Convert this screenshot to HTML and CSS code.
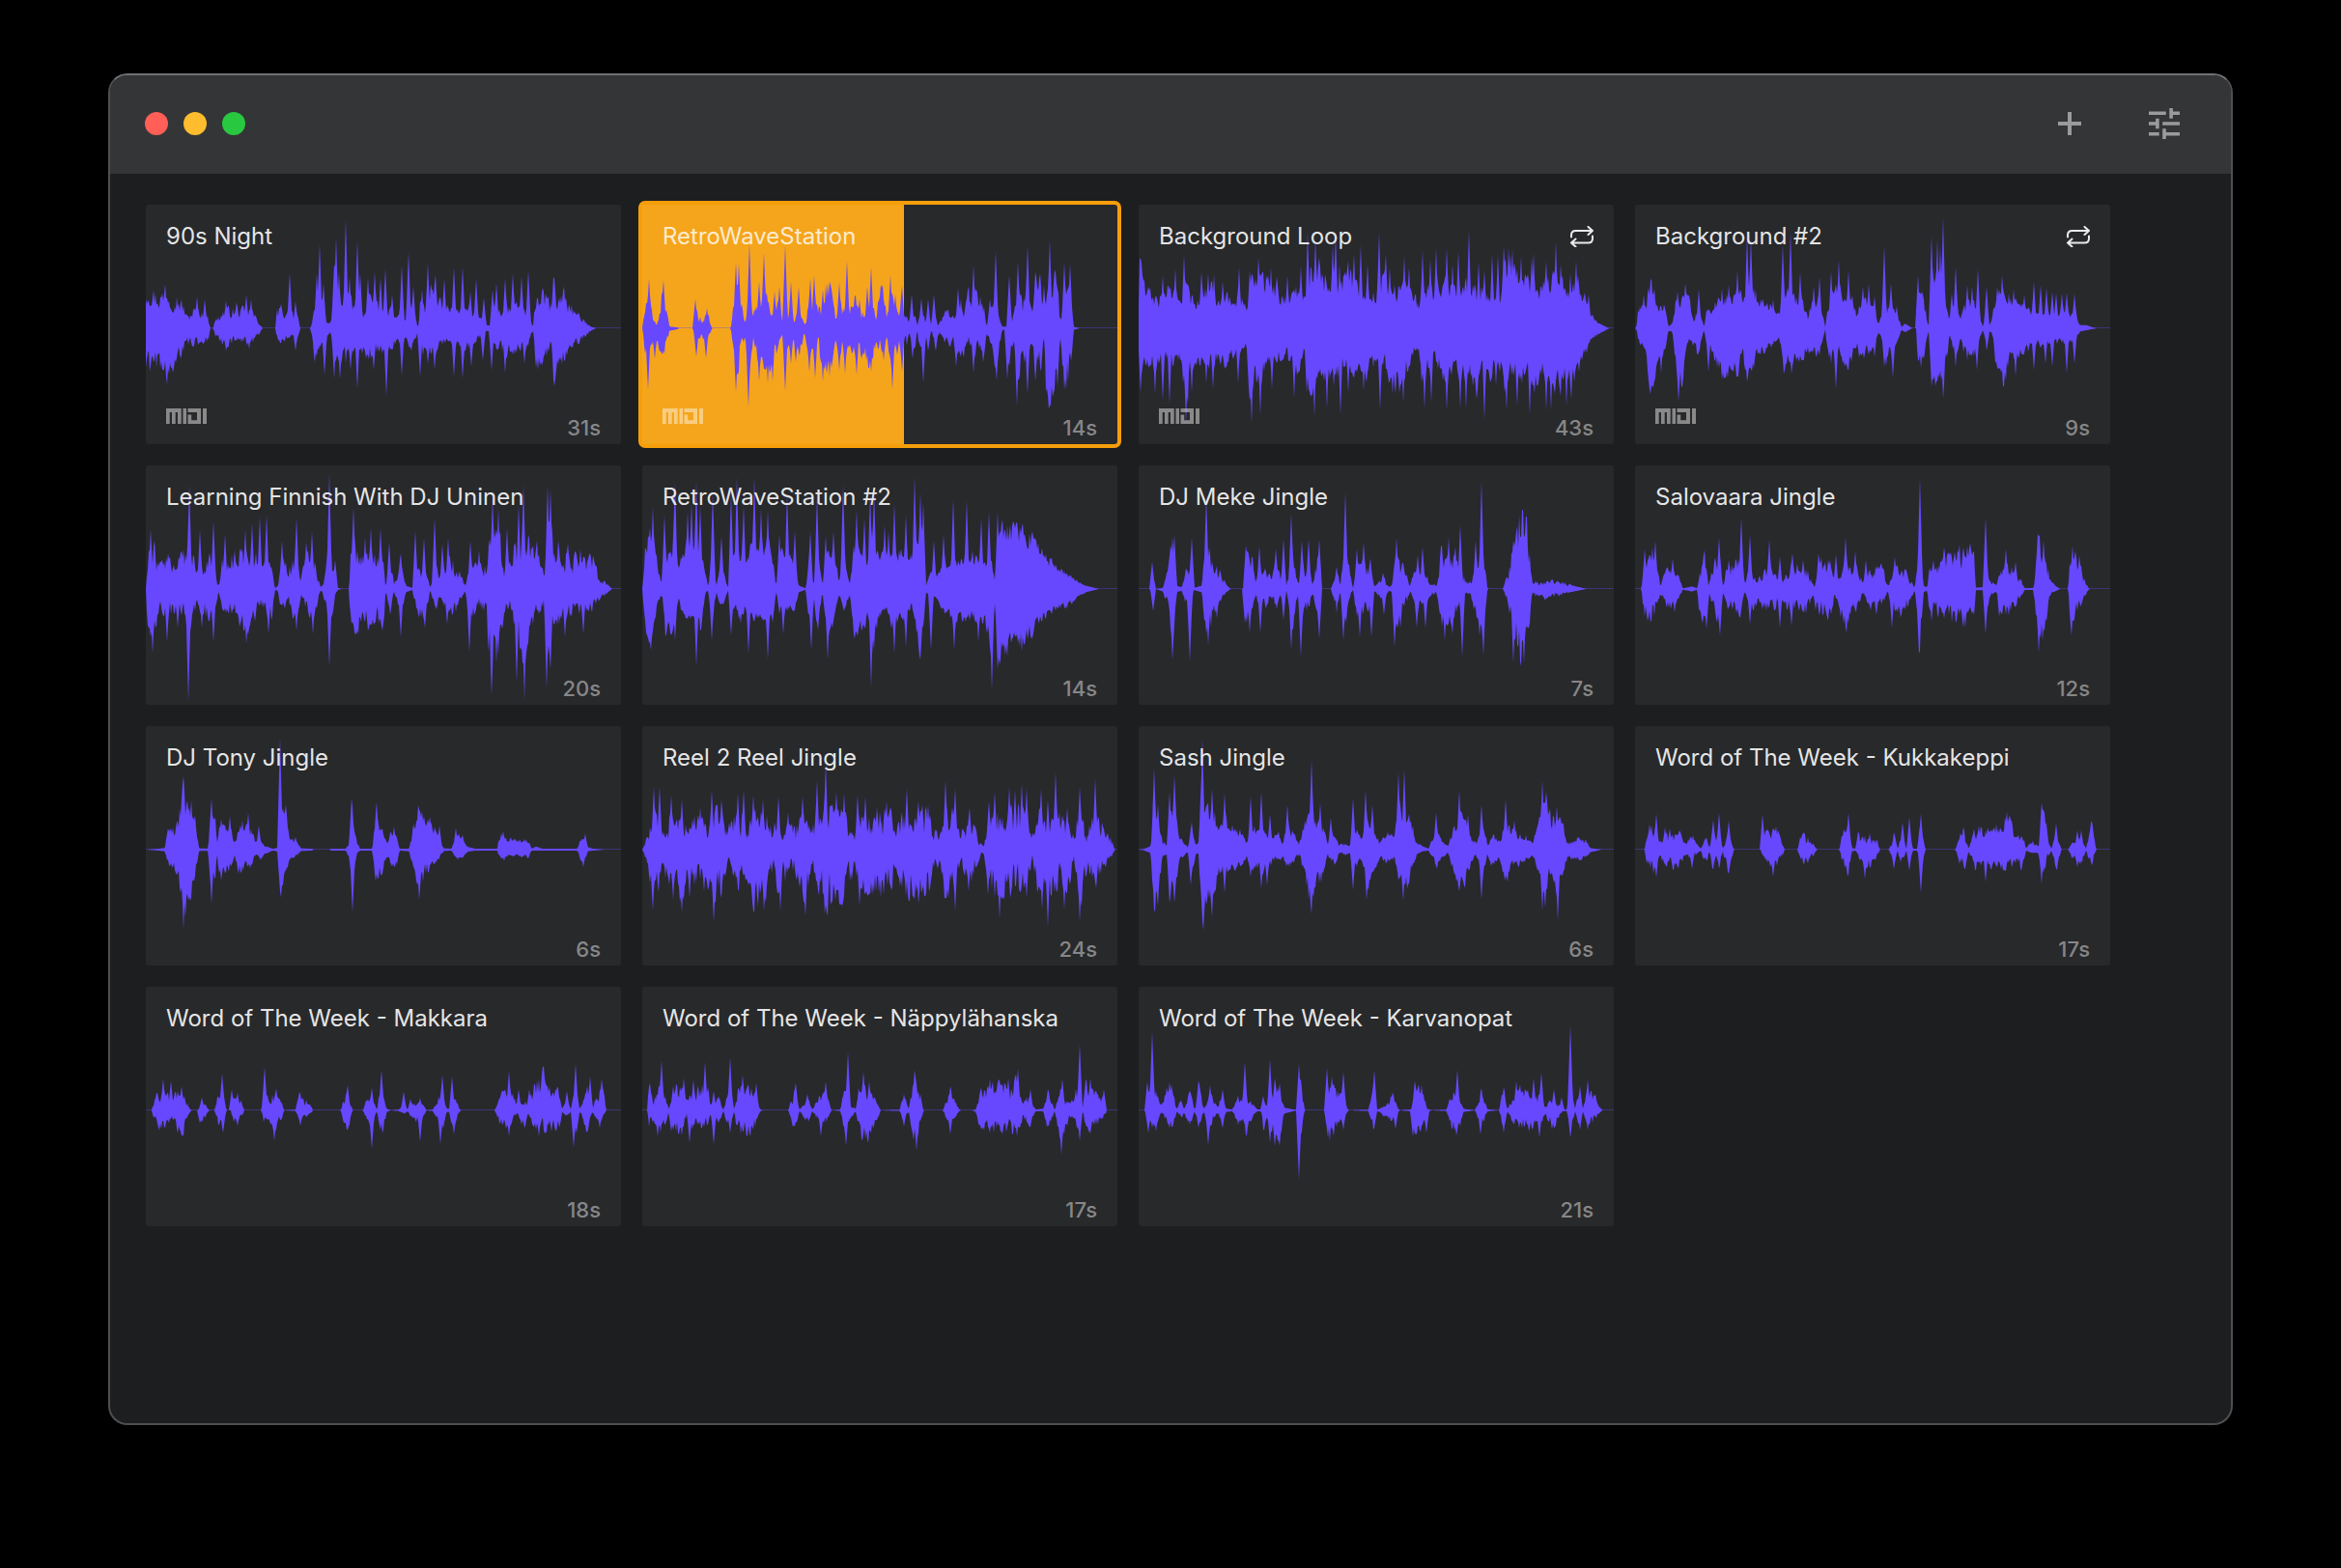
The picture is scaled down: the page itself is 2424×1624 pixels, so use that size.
FILE: index.html
```html
<!DOCTYPE html>
<html lang="en">
<head>
<meta charset="utf-8">
<title>Jingle Board</title>
<meta name="viewport" content="width=device-width, initial-scale=1">
<link rel="stylesheet" href="styles.css">
</head>
<body>
<svg class="sprite" aria-hidden="true">
  <symbol id="midi" viewBox="0 0 42 16">
    <path d="M0 0H15.7V16H12V4H9.7V16H6V4H3.7V16H0ZM17.5 0H21V16H17.5ZM22.5 0H36V16H22.5V6.5H26.2V12.3H32V4H22.5ZM38 0H42V16H38Z"/>
  </symbol>
  <symbol id="repeat" viewBox="0 0 24 22">
    <path d="M1 11.5V9.5Q1 5 5.5 5H23M18.5 1L23 5L18.5 9M23 10.5V13Q23 17.500 18.500 17.500H1M5.500 13.500L1 17.500L5.500 21.500"/>
  </symbol>
</svg>
<div class="window">
  <header class="titlebar">
    <div class="lights">
      <button class="light light-close" aria-label="Close"></button>
      <button class="light light-minimize" aria-label="Minimize"></button>
      <button class="light light-zoom" aria-label="Zoom"></button>
    </div>
    <div class="tools">
      <button class="tool" aria-label="Add clip"><svg class="icon-plus" viewBox="0 0 24 24"><path d="M10 0h4v10h10v4H14v10h-4V14H0v-4h10z"/></svg></button>
      <button class="tool" aria-label="Settings"><svg class="icon-tune" viewBox="3 3 18 18"><path d="M3 17v2h6v-2H3zM3 5v2h10V5H3zm10 16v-2h8v-2h-8v-2h-2v6h2zM7 9v2H3v2h4v2h2V9H7zm14 4v-2H11v2h10zm-6-4h2V7h4V5h-4V3h-2v6z"/></svg></button>
    </div>
  </header>
  <main class="board">
    <button class="clip"><svg class="wave" data-clip="night"></svg><span class="title">90s Night</span><svg class="midi"><use href="#midi"/></svg><span class="time">31s</span></button>
    <button class="clip playing"><span class="progress" style="width:55%"></span><svg class="wave" data-clip="retro"></svg><span class="title">RetroWaveStation</span><svg class="midi"><use href="#midi"/></svg><span class="time">14s</span></button>
    <button class="clip"><svg class="wave" data-clip="loop"></svg><span class="title">Background Loop</span><svg class="repeat"><use href="#repeat"/></svg><svg class="midi"><use href="#midi"/></svg><span class="time">43s</span></button>
    <button class="clip"><svg class="wave" data-clip="background2"></svg><span class="title">Background #2</span><svg class="repeat"><use href="#repeat"/></svg><svg class="midi"><use href="#midi"/></svg><span class="time">9s</span></button>
    <button class="clip"><svg class="wave" data-clip="finnish"></svg><span class="title">Learning Finnish With DJ Uninen</span><span class="time">20s</span></button>
    <button class="clip"><svg class="wave" data-clip="retro2"></svg><span class="title">RetroWaveStation #2</span><span class="time">14s</span></button>
    <button class="clip"><svg class="wave" data-clip="meke"></svg><span class="title">DJ Meke Jingle</span><span class="time">7s</span></button>
    <button class="clip"><svg class="wave" data-clip="salovaara"></svg><span class="title">Salovaara Jingle</span><span class="time">12s</span></button>
    <button class="clip"><svg class="wave" data-clip="tony"></svg><span class="title">DJ Tony Jingle</span><span class="time">6s</span></button>
    <button class="clip"><svg class="wave" data-clip="reel"></svg><span class="title">Reel 2 Reel Jingle</span><span class="time">24s</span></button>
    <button class="clip"><svg class="wave" data-clip="sash"></svg><span class="title">Sash Jingle</span><span class="time">6s</span></button>
    <button class="clip"><svg class="wave" data-clip="kukkakeppi"></svg><span class="title">Word of The Week - Kukkakeppi</span><span class="time">17s</span></button>
    <button class="clip"><svg class="wave" data-clip="makkara"></svg><span class="title">Word of The Week - Makkara</span><span class="time">18s</span></button>
    <button class="clip"><svg class="wave" data-clip="nappylahanska"></svg><span class="title">Word of The Week - Näppylähanska</span><span class="time">17s</span></button>
    <button class="clip"><svg class="wave" data-clip="karvanopat"></svg><span class="title">Word of The Week - Karvanopat</span><span class="time">21s</span></button>
  </main>
</div>
<script src="waves.js"></script>
</body>
</html>
```
FILE: styles.css
```css
:root {
  --accent: #6748ff;
  --playing: #f5a51b;
  --text: rgba(255, 255, 255, 0.9);
  --text-playing: rgba(255, 255, 255, 0.8);
  --muted: rgba(255, 255, 255, 0.45);
}

* {
  box-sizing: border-box;
}

body {
  margin: 0;
  background: #000;
  color: var(--text);
  font-family: Inter, "Liberation Sans", sans-serif;
}

button {
  margin: 0;
  padding: 0;
  border: 0;
  background: none;
  color: inherit;
  font: inherit;
}

.sprite {
  position: absolute;
  width: 0;
  height: 0;
}

.window {
  display: flex;
  flex-direction: column;
  min-height: calc(100vh - 224px);
  margin: 76px 112px 148px;
  border: 2px solid #4e4f51;
  border-top-color: #707172;
  border-radius: 20px;
  background: #1d1e20;
  overflow: hidden;
}

.titlebar {
  display: flex;
  align-items: center;
  justify-content: space-between;
  height: 102px;
  padding: 0 45px 2px 36px;
  background: #343537;
}

.lights {
  display: flex;
  gap: 16px;
}

.light {
  width: 24px;
  height: 24px;
  border-radius: 50%;
}

.light-close { background: #ff5f57; }
.light-minimize { background: #febc2e; }
.light-zoom { background: #28c840; }

.tools {
  display: flex;
  gap: 50px;
}

.tool {
  display: grid;
  place-items: center;
  width: 48px;
  height: 48px;
  fill: #9a9b9c;
}

.icon-plus {
  width: 24px;
  height: 24px;
}

.icon-tune {
  width: 32px;
  height: 32px;
}

.board {
  display: grid;
  grid-template-columns: repeat(auto-fill, 492px);
  gap: 22px;
  padding: 32px 37px;
}

.clip {
  position: relative;
  display: grid;
  grid-template-columns: 1fr auto;
  grid-template-rows: auto 1fr;
  height: 248px;
  padding: 18px 21px 0;
  border-radius: 3px;
  background: #28292b;
  text-align: left;
}

.clip.playing {
  box-shadow: 0 0 0 4px #f59e0b;
}

.clip.playing .title {
  color: var(--text-playing);
}

.progress {
  position: absolute;
  inset: 0 auto 0 0;
  background: var(--playing);
}

.wave {
  position: absolute;
  inset: 0;
  width: 100%;
  height: 100%;
  fill: var(--accent);
}

.title {
  position: relative;
  font-size: 24px;
  line-height: 30px;
  font-weight: 400;
  white-space: nowrap;
}

.repeat {
  position: relative;
  align-self: center;
  justify-self: end;
  width: 24px;
  height: 22px;
  fill: none;
  stroke: var(--text);
  stroke-width: 2;
  stroke-linecap: round;
  stroke-linejoin: round;
}

.midi {
  position: relative;
  grid-row: 2;
  grid-column: 1;
  align-self: end;
  width: 42px;
  height: 16px;
  margin-bottom: 21px;
  fill: var(--muted);
}

.time {
  position: relative;
  grid-row: 2;
  grid-column: 2;
  align-self: end;
  margin-bottom: 3px;
  color: var(--muted);
  font-size: 22px;
  line-height: 28px;
  font-weight: 500;
}
```
FILE: waves.js
```js
// Amplitude data per clip. body: "x up down" along the clip, joined linearly.
// up / down: "x,height" transients. span: length of the clip in x units.
// rough: how far single samples fall below and above the body.
const clips = {
  night: { span: 1377, rough: 0.7,
    body: "0 110 110;5 115 115;30 90 95;50 90 110;60 110 150;70 90 110;90 85 90;110 60 60;120 30 40;140 50 45;165 45 35;180 30 40;187 0 0;195 0 0;200 20 20;230 50 50;260 50 30;300 50 40;320 30 30;338 0 0;375 0 0;380 45 30;395 60 45;405 35 30;420 50 20;440 30 40;448 0 0;477 0 0;490 50 90;505 90 80;515 20 20;535 15 15;545 60 70;560 60 90;580 100 90;600 60 60;620 60 80;630 25 60;650 90 80;665 70 60;690 40 60;720 50 50;745 25 20;770 50 50;790 5 10;795 70 60;810 60 70;830 120 60;860 60 40;890 50 60;920 60 60;950 40 40;985 10 8;1000 8 10;1010 60 50;1030 50 60;1060 60 70;1090 60 60;1110 30 40;1122 5 5;1130 90 100;1160 90 70;1175 60 50;1182 130 160;1190 80 90;1210 95 80;1240 50 50;1270 20 25;1290 5 8;1305 0 0",
    up: "57,138;148,98;172,90;232,85;262,80;290,105;305,90;418,172;435,85;495,170;505,262;515,140;545,200;552,282;560,175;578,342;590,160;614,272;620,170;645,158;662,175;681,155;695,185;715,105;743,195;760,237;775,130;800,120;818,203;840,165;866,155;894,190;919,190;940,115;957,155;980,95;1005,120;1017,140;1040,155;1063,170;1090,160;1107,180;1182,158;1213,130",
    down: "62,175;232,70;300,65;435,70;517,145;545,155;562,158;593,130;614,188;661,130;698,210;743,145;796,150;818,110;838,130;894,150;917,155;943,120;978,100;1002,130;1040,140;1097,110;1135,130;1184,180" },
  retro: { span: 1476, rough: 0.8,
    body: "0 0 0;10 60 70;18 100 120;25 60 60;35 20 40;45 15 30;55 50 60;65 110 70;75 50 60;85 5 8;110 3 3;113 0 0;158 0 0;165 50 50;185 20 15;200 55 60;215 3 3;218 0 0;275 0 0;283 60 60;292 110 150;305 70 60;320 20 20;332 80 130;345 40 20;355 50 60;365 80 100;380 120 90;395 50 120;405 30 60;425 70 60;435 20 20;445 70 60;460 30 30;475 25 40;487 60 70;505 10 10;515 50 90;530 50 60;545 60 40;560 70 110;575 120 110;590 110 90;600 40 40;615 70 60;635 40 50;660 80 60;675 50 50;690 50 90;710 90 100;725 40 40;745 110 60;760 30 30;775 90 90;790 40 60;805 90 60;812 30 10;822 30 40;835 5 8;845 40 60;855 10 10;868 60 90;880 15 20;890 30 40;900 4 8;907 50 50;920 10 15;935 30 30;950 50 50;965 30 40;985 60 60;1000 60 70;1015 90 40;1030 80 80;1045 90 60;1060 60 70;1070 10 20;1080 60 50;1090 50 60;1100 100 130;1110 30 60;1118 5 5;1132 5 5;1140 110 110;1150 30 40;1160 60 80;1168 130 180;1180 70 50;1195 110 130;1205 60 50;1215 60 50;1225 140 100;1240 140 120;1247 20 20;1255 80 200;1270 130 210;1285 140 100;1292 100 130;1300 20 20;1310 100 150;1325 100 140;1337 40 40;1340 5 5;1359 0 0",
    up: "22,155;67,150;166,90;202,62;292,205;300,200;333,262;362,145;379,235;410,115;427,130;445,258;462,145;486,128;521,155;535,165;562,120;575,140;583,145;613,142;635,210;660,100;675,90;698,130;710,190;742,135;748,135;772,165;785,105;808,132;838,105;868,92;888,90;905,105;980,125;990,90;1028,195;1050,100;1080,90;1099,240;1140,165;1168,205;1198,258;1222,175;1235,170;1248,135;1265,275;1283,165;1312,205;1328,200",
    down: "17,190;38,95;168,88;199,92;291,198;331,245;363,165;390,170;405,165;445,195;462,110;478,105;520,135;537,155;560,165;583,150;612,130;630,140;665,145;710,135;750,100;777,190;806,135;840,95;872,170;888,70;912,70;975,120;1028,138;1060,105;1100,162;1135,160;1165,240;1196,205;1220,165;1240,135;1262,225;1270,240;1290,180;1315,155" },
  loop: { span: 1476, rough: 0.5,
    body: "0 0 0;3 200 180;10 190 150;20 110 100;40 100 95;60 80 100;75 95 100;90 120 80;110 100 100;125 80 80;140 120 150;150 120 220;160 90 120;175 75 100;200 110 90;225 120 110;245 90 80;265 100 110;285 80 90;300 90 70;320 80 60;335 60 60;345 120 200;360 150 140;380 140 150;400 130 100;420 120 90;445 90 80;460 80 75;480 110 120;500 120 130;515 100 60;525 160 170;545 170 190;570 160 150;590 130 130;610 160 160;630 130 110;650 150 120;670 160 120;690 80 160;710 120 140;725 90 110;745 120 100;765 160 100;780 120 150;800 110 170;820 110 160;840 130 100;860 90 60;870 60 60;880 110 200;895 120 130;915 110 60;935 120 120;960 140 170;985 100 100;1005 130 130;1030 120 130;1050 110 170;1070 110 120;1090 110 150;1110 100 100;1125 80 130;1140 200 170;1160 190 130;1180 150 160;1200 150 130;1220 140 170;1240 110 150;1260 150 130;1275 130 130;1295 170 190;1310 150 170;1330 110 140;1345 110 150;1365 140 150;1375 90 90;1390 80 80;1400 50 40;1415 25 25;1440 10 12;1462 0 0",
    up: "5,215;75,165;114,185;142,228;195,175;215,170;235,168;260,145;313,190;345,180;371,220;395,165;410,190;430,160;462,165;503,195;524,300;550,280;560,220;602,260;613,300;625,200;650,210;668,230;689,260;710,200;748,300;768,230;780,190;824,225;840,190;882,240;907,215;925,250;957,250;975,200;993,240;1027,305;1055,205;1075,180;1098,230;1115,230;1133,255;1150,250;1160,245;1187,225;1220,220;1228,235;1265,210;1297,270;1310,200;1342,170;1360,210;1385,110;1398,105",
    down: "6,200;50,205;75,225;95,235;147,300;165,200;210,170;230,190;310,170;350,295;378,270;413,190;482,215;523,200;545,275;586,250;627,270;652,200;700,195;749,255;790,205;823,230;888,250;910,230;958,255;998,250;1018,250;1050,220;1075,285;1110,180;1142,255;1175,240;1215,270;1267,255;1280,255;1310,210;1328,240;1345,220" },
  background2: { span: 1169, rough: 0.5,
    body: "0 0 0;4 5 5;8 60 30;20 70 60;28 60 80;33 130 150;45 140 150;52 60 120;60 60 90;75 60 60;82 5 8;92 15 10;100 80 100;110 60 190;118 90 130;125 90 60;132 90 40;145 30 50;155 50 80;163 30 30;170 3 3;176 50 60;190 50 60;205 90 120;215 80 140;235 100 130;250 110 130;265 100 80;275 130 140;285 120 130;300 90 80;315 80 65;335 70 50;355 50 30;365 120 120;380 100 100;395 90 90;410 90 90;425 30 60;435 80 80;455 70 70;468 3 3;475 60 80;485 100 90;500 120 60;515 110 110;530 100 100;545 40 50;555 80 90;570 80 70;585 70 80;598 10 12;605 40 30;618 50 100;625 60 60;640 50 60;652 20 20;655 3 5;665 15 12;682 0 0;692 0 0;696 120 110;705 100 110;715 50 50;722 3 5;730 150 150;745 120 130;760 100 150;768 60 70;775 15 15;785 60 70;792 80 70;800 30 40;815 70 80;828 80 70;840 60 70;850 30 30;856 3 5;865 60 60;872 10 10;880 40 20;886 90 90;900 100 120;910 100 160;920 90 80;940 80 90;960 70 70;975 50 50;990 40 50;1010 45 45;1030 50 45;1060 45 40;1085 40 30;1095 10 10;1110 10 6;1128 2 2;1135 0 0",
    up: "40,155;22,105;65,70;104,115;123,140;158,120;180,60;213,125;230,135;252,180;275,290;285,285;297,120;340,90;363,260;382,300;407,175;440,130;453,160;483,178;502,212;526,180;561,130;575,140;590,100;614,255;630,140;645,70;697,165;730,288;744,275;752,255;759,345;780,110;790,190;818,135;830,130;844,185;864,130;890,130;904,165;920,110;932,120;958,105;981,145;998,135;1012,125;1026,115;1036,110;1050,110;1063,112;1080,108",
    down: "38,205;48,160;65,140;108,228;117,180;180,135;213,160;255,150;275,165;365,140;384,140;405,105;447,90;482,110;495,190;523,120;590,90;614,120;634,155;730,180;738,180;759,218;790,120;818,100;842,130;905,180;935,150;982,130;1010,110;1027,120;1063,140;1080,110" },
  finnish: { span: 749, rough: 0.8,
    body: "0 0 0;3 90 100;8 110 120;15 100 100;25 80 60;40 70 60;60 90 60;68 120 120;75 90 50;90 70 60;105 90 90;115 5 10;120 70 50;135 80 60;155 110 110;170 100 80;180 50 40;190 80 60;197 90 90;204 2 3;208 10 5;215 70 70;225 50 40;235 90 80;245 30 20;250 60 40;258 100 80;268 60 60;276 2 2;282 40 30;290 110 120;297 50 40;302 3 3;310 0 0;320 0 0;323 90 90;328 120 120;335 120 100;345 80 90;360 80 100;375 60 90;378 3 3;385 70 60;392 10 10;400 90 80;410 10 10;420 3 3;425 50 50;440 70 90;448 3 3;458 60 50;465 20 20;475 80 60;490 60 60;503 10 10;512 70 90;525 60 50;535 60 60;543 120 190;557 200 180;565 30 50;575 90 60;587 130 130;597 180 200;605 110 90;620 100 80;628 40 50;635 200 200;645 100 90;660 90 80;675 90 70;690 80 60;705 80 60;715 30 30;725 20 15;735 0 0",
    up: "8,185;13,150;35,110;69,325;85,185;106,210;125,170;140,120;157,185;168,205;180,225;191,232;215,150;238,222;252,145;262,180;290,360;299,90;328,255;345,160;355,190;370,190;384,145;402,110;424,180;439,158;455,220;468,140;477,158;512,150;525,120;547,290;556,250;570,190;587,260;596,325;616,150;634,320;638,310;650,150;665,140;685,125;700,110",
    down: "10,200;33,165;50,120;67,350;88,120;107,165;158,170;193,140;237,130;263,140;290,240;330,140;350,130;385,80;402,150;440,120;475,110;510,195;545,330;552,230;585,290;597,345;632,310;638,250;660,150;690,140" },
  retro2: { span: 749, rough: 0.4,
    body: "0 0 0;5 120 120;15 180 180;25 60 30;32 10 20;36 90 130;50 120 110;58 70 30;66 120 100;80 120 80;92 130 120;100 50 10;104 5 5;110 110 90;117 10 10;125 80 60;132 20 20;136 3 3;140 130 90;148 80 50;155 110 100;162 70 60;170 120 90;180 140 80;190 110 100;200 120 110;206 90 90;211 3 3;216 110 70;225 110 60;232 100 60;240 60 60;247 10 10;258 2 2;262 80 100;270 10 10;276 120 130;284 10 10;292 100 120;303 120 100;310 20 20;318 100 60;327 10 20;333 110 130;350 110 110;358 80 70;362 150 200;372 100 90;385 90 60;395 90 120;405 110 80;415 120 90;425 90 50;437 160 170;444 120 100;447 10 10;455 50 30;460 20 20;470 60 50;485 80 80;500 80 90;510 100 90;520 90 80;530 90 100;540 80 90;550 90 170;557 10 10;559 180 220;570 180 180;585 180 170;600 180 160;615 150 130;625 120 100;640 90 70;655 60 55;670 45 50;685 25 25;700 10 10;720 0 0",
    up: "12,190;17,255;35,230;50,250;52,330;72,240;77,270;85,335;92,260;111,300;125,165;140,300;149,350;160,260;177,350;188,250;198,245;216,170;228,300;240,180;265,180;276,290;290,165;302,180;316,325;338,245;350,220;360,300;366,310;382,200;388,180;398,265;415,230;430,350;438,300;443,270;460,150;475,170;490,280;511,275;520,120;535,220;546,240;560,240;600,205;618,155",
    down: "14,190;52,160;86,240;110,160;140,145;167,200;198,220;222,140;267,190;292,220;335,150;361,305;398,200;415,180;439,220;455,190;492,190;530,165;551,315;560,250;575,210;598,195" },
  meke: { span: 749, rough: 0.8,
    body: "0 0 0;18 0 0;20 30 30;25 30 20;27 0 0;38 3 8;48 60 50;54 140 160;60 10 10;68 5 5;75 50 40;82 60 120;86 3 3;100 10 10;107 180 150;114 90 90;125 50 50;135 20 15;145 0 0;165 0 0;169 90 90;178 90 60;185 15 10;190 60 60;200 50 50;208 30 20;218 80 50;226 15 10;233 10 5;243 100 110;248 50 40;253 20 20;257 50 70;265 60 60;275 20 10;282 80 90;289 0 0;303 0 0;312 50 60;318 20 10;326 120 100;333 50 20;338 3 3;345 60 90;355 60 60;365 70 60;372 8 5;380 20 25;386 30 30;395 5 5;400 15 10;406 100 100;420 40 50;428 10 8;435 50 40;450 50 50;460 20 15;470 8 12;478 110 90;490 80 100;505 80 60;515 20 10;522 20 20;530 40 60;543 100 120;550 0 0;574 0 0;582 40 30;592 150 120;603 200 200;614 150 130;620 20 15;640 18 28;655 22 22;675 15 12;706 0 0",
    up: "22,85;56,168;74,65;84,160;106,285;111,130;128,60;169,135;178,98;191,132;216,125;229,155;241,235;258,150;268,155;285,155;312,70;326,300;344,125;355,145;366,95;385,50;407,158;417,80;440,105;448,130;478,135;489,160;500,130;507,198;532,150;541,335;591,150;597,195;604,242;610,225;650,28",
    down: "23,68;53,222;81,225;109,175;124,90;168,105;175,135;192,135;228,95;241,188;256,210;284,155;322,160;349,150;367,150;386,80;403,180;412,120;438,120;452,120;482,160;495,140;510,210;538,145;543,205;590,230;603,240;608,230" },
  salovaara: { span: 749, rough: 0.8,
    body: "0 0 0;10 0 0;13 60 60;22 80 80;32 70 60;40 10 10;50 50 50;60 60 50;72 20 20;75 2 2;90 8 8;98 2 2;102 40 80;110 90 90;116 10 10;123 60 50;133 90 110;139 5 5;145 70 50;165 70 70;173 15 10;182 60 60;190 30 40;205 50 60;220 50 50;228 10 20;240 40 50;250 70 50;262 50 50;271 50 60;283 5 5;290 70 60;308 70 70;315 10 15;330 60 100;347 60 60;360 20 10;372 50 60;390 60 40;398 8 8;410 60 70;425 50 60;441 3 3;449 160 160;455 10 10;460 5 5;465 60 70;480 60 60;488 80 70;510 100 100;535 100 70;537 4 4;550 6 4;553 80 60;560 20 20;570 10 10;574 60 60;590 60 60;610 20 20;614 2 3;628 3 3;635 120 130;647 90 100;655 20 15;670 0 0;683 0 0;685 90 90;697 80 60;710 20 15;716 0 0",
    up: "15,125;27,130;32,150;60,95;108,105;133,160;148,90;168,222;181,168;212,152;228,100;248,110;265,90;289,110;317,108;332,162;347,118;364,90;388,80;410,100;449,345;471,90;487,130;508,120;520,100;532,105;552,222;585,125;600,85;635,170;644,150;690,135;700,105",
    down: "24,102;62,72;112,125;134,145;181,110;228,120;246,115;285,65;333,135;380,80;405,120;447,200;468,100;505,105;520,120;552,140;585,80;637,200;642,160;688,145" },
  tony: { span: 749, rough: 0.6,
    body: "0 0 0;15 2 2;30 5 5;34 50 45;45 60 50;52 90 80;58 160 160;65 130 110;70 100 130;78 90 60;84 4 4;98 4 4;103 110 110;110 80 100;112 5 5;116 80 70;125 60 60;133 60 50;140 25 20;145 60 70;155 70 50;165 60 50;172 30 20;180 30 25;190 10 12;200 3 3;207 5 5;212 150 120;217 100 90;222 90 60;228 30 20;237 25 18;245 4 4;263 3 3;264 0 0;290 0 0;292 3 3;315 3 3;320 20 20;326 120 130;333 20 10;338 3 3;357 3 3;362 100 80;372 60 60;380 15 20;388 55 40;396 30 40;400 3 3;415 3 5;425 90 80;432 100 100;442 90 60;455 70 40;465 20 20;470 4 4;482 3 3;488 50 30;500 30 20;508 8 6;520 3 3;554 3 3;558 45 25;570 30 18;603 30 20;608 3 3;615 10 3;625 3 3;680 3 3;686 30 30;693 25 25;697 8 5;704 3 3;724 0 0",
    up: "60,228;72,155;104,160;119,95;132,105;152,92;162,115;178,75;211,350;220,140;236,40;324,160;364,148;391,72;429,138;445,95;463,75;489,68;500,45;563,58;693,50",
    down: "59,250;63,210;104,168;119,95;146,75;212,130;326,195;365,90;431,155;437,100;565,35;690,55" },
  reel: { span: 749, rough: 1,
    body: "0 0 0;8 30 30;15 80 110;25 80 90;38 60 60;48 90 120;62 70 120;72 60 60;85 80 80;98 60 50;110 100 130;125 90 100;135 50 40;150 90 90;165 80 60;178 90 130;195 90 110;205 50 50;215 80 100;230 60 60;240 50 50;255 90 130;268 50 40;278 90 100;290 100 130;305 90 120;322 90 110;333 40 50;345 70 90;360 70 100;375 90 120;390 100 100;400 50 40;412 90 110;430 90 120;450 90 110;463 40 40;478 90 110;490 90 120;503 40 30;515 80 90;525 50 40;532 20 20;538 10 10;545 80 90;560 90 110;580 100 90;600 100 90;615 50 30;625 90 110;640 90 140;655 80 90;672 70 90;680 30 30;690 110 150;700 30 50;713 110 70;722 80 60;730 40 40;740 25 20;745 0 0",
    up: "18,195;28,195;45,170;62,155;82,105;92,130;109,185;125,155;150,175;160,185;175,170;190,155;215,165;230,115;253,165;276,215;290,270;306,180;318,175;340,170;352,165;370,130;385,150;417,190;435,150;450,140;478,215;493,190;516,130;547,150;556,180;578,195;588,185;598,205;606,190;628,190;640,155;652,240;670,130;690,195;714,220",
    down: "17,190;48,155;62,195;75,150;98,130;113,225;125,150;150,120;175,190;192,190;218,190;258,205;288,200;300,160;342,175;380,140;415,145;430,155;478,150;494,190;515,130;545,140;563,215;580,150;606,150;630,185;640,240;665,185;690,225;715,120" },
  sash: { span: 749, rough: 0.6,
    body: "0 0 0;8 2 2;18 10 10;25 90 150;32 80 120;38 20 15;45 15 15;50 100 110;58 150 120;64 40 30;70 20 20;78 8 8;83 70 70;90 20 20;95 20 15;98 180 170;105 170 200;112 110 120;118 120 150;125 60 60;138 80 70;150 60 60;160 50 50;170 20 20;180 60 60;190 50 50;202 40 60;212 30 30;220 50 30;228 20 20;235 80 60;245 40 30;253 15 15;262 80 80;272 120 160;280 80 80;290 70 90;298 15 20;310 60 40;316 15 10;325 15 15;333 10 10;340 60 60;350 40 30;360 80 100;372 50 60;380 20 20;390 50 40;403 40 30;412 130 100;422 100 120;430 80 60;438 20 15;448 10 5;457 3 3;468 50 40;480 20 20;488 12 8;495 50 50;507 100 110;515 80 90;525 30 30;533 20 20;542 90 90;550 15 15;556 40 40;570 30 30;578 80 80;590 50 50;605 40 35;620 20 15;630 60 60;640 150 150;650 90 60;660 90 110;670 60 70;676 20 20;690 30 30;705 25 20;712 5 8;730 0 0",
    up: "24,255;31,140;49,180;57,230;84,85;100,345;115,190;136,175;177,165;193,180;207,110;235,140;272,280;286,145;303,100;338,160;358,185;368,140;409,240;418,250;428,85;469,115;506,185;519,110;541,140;579,155;592,90;610,45;636,215;643,180;659,135;693,38",
    down: "24,185;30,175;49,165;56,165;82,110;102,250;116,210;136,135;177,85;193,120;202,110;272,200;285,105;338,125;359,155;417,160;470,60;505,130;541,155;582,100;636,190;641,180;661,220" },
  kukkakeppi: { span: 749, rough: 0.9,
    body: "0 0 0;15 0 0;18 30 30;24 40 45;32 90 80;38 20 20;50 40 40;60 40 45;72 40 40;80 10 15;85 35 30;95 20 15;104 3 3;110 30 40;118 5 5;122 60 50;128 20 20;133 60 60;138 2 2;147 50 60;156 0 0;198 0 0;202 40 30;212 40 45;225 50 50;234 10 10;236 0 0;256 0 0;262 40 40;275 30 30;285 5 5;287 0 0;322 0 0;328 50 40;335 80 70;342 5 5;348 3 3;353 40 20;365 30 50;380 30 30;386 0 0;400 0 0;408 40 40;414 3 3;420 40 40;428 3 3;432 60 40;438 3 3;445 3 3;450 70 60;458 0 0;505 0 0;512 40 45;520 40 40;526 3 5;535 45 45;548 60 50;560 40 40;575 50 50;590 90 50;600 30 40;612 40 50;616 3 3;625 25 10;636 10 10;641 110 80;650 40 25;656 3 3;665 60 50;672 0 0;683 0 0;690 30 30;705 30 30;711 3 3;719 70 40;727 0 0",
    up: "23,80;34,112;47,70;55,65;72,55;91,45;112,38;123,92;132,115;148,90;201,110;222,72;267,55;336,115;352,55;370,50;409,45;422,85;432,100;451,112;518,70;535,65;542,75;556,68;570,80;586,118;605,45;641,145;648,80;664,82;697,60;703,60;719,82",
    down: "22,45;33,88;60,60;90,60;123,60;147,75;217,85;267,45;335,82;362,90;408,60;432,65;450,135;520,60;552,100;585,65;641,85;665,60;697,55" },
  makkara: { span: 749, rough: 0.9,
    body: "0 0 0;9 0 0;14 35 35;25 50 45;35 40 40;42 30 20;50 50 50;58 50 70;65 20 20;70 3 5;72 0 0;82 0 0;88 20 30;96 10 10;100 0 0;108 0 0;115 50 40;122 60 60;127 0 0;134 0 0;138 35 35;152 20 20;155 0 0;182 0 0;186 60 30;197 30 30;205 50 50;215 20 20;218 0 0;236 2 2;242 45 30;250 30 20;262 8 5;263 0 0;307 0 0;312 30 30;318 60 50;326 0 0;342 0 0;350 35 30;358 40 60;364 3 3;372 90 60;380 5 5;386 0 0;398 2 2;408 15 10;413 2 2;418 20 20;430 20 30;440 10 10;442 0 0;452 2 2;460 30 30;468 70 60;474 5 5;478 5 5;484 60 60;494 5 5;497 0 0;550 0 0;552 10 10;560 40 40;575 60 45;585 20 15;598 20 40;603 20 20;612 60 45;627 100 50;640 50 40;652 50 50;656 5 5;665 30 20;670 3 3;678 60 60;684 3 3;695 60 50;704 3 3;712 50 50;720 60 20;726 0 0",
    up: "28,98;40,92;57,75;88,40;121,115;136,65;145,55;187,135;206,68;243,52;318,78;356,70;372,125;407,58;417,35;433,38;467,110;482,105;573,122;588,65;604,65;613,80;626,108;645,65;663,60;678,145;700,105;718,98",
    down: "25,50;50,72;56,80;85,40;122,70;145,48;203,95;244,48;316,60;356,120;370,60;433,98;465,105;485,75;573,80;592,45;615,60;620,80;640,65;675,115;697,60;715,55" },
  nappylahanska: { span: 749, rough: 0.9,
    body: "0 0 0;8 0 0;10 60 40;18 30 30;25 60 60;35 50 40;42 3 3;50 50 50;60 60 70;70 30 10;78 60 50;95 60 50;105 50 30;110 2 5;120 30 40;128 2 2;138 60 60;145 3 3;150 50 60;160 60 60;175 50 50;186 3 3;190 0 0;230 0 0;240 50 50;248 3 3;262 30 30;268 3 3;275 25 20;290 50 30;298 2 2;300 0 0;312 2 2;320 60 60;328 20 20;337 3 3;342 60 60;355 60 80;370 20 30;376 0 0;406 2 2;412 40 30;420 5 5;430 80 80;442 5 10;444 0 0;474 0 0;480 30 30;488 50 30;500 2 2;502 0 0;520 0 0;526 2 5;530 40 40;545 60 60;565 70 50;580 50 50;590 80 60;600 20 20;610 40 40;620 3 3;632 5 3;640 50 50;650 3 3;658 50 60;665 30 60;675 20 15;685 60 40;695 5 3;700 70 50;715 40 40;725 30 20;731 3 10;732 0 0",
    up: "12,85;30,155;48,75;65,100;80,95;99,150;112,60;138,165;158,110;168,80;180,85;242,85;260,52;290,90;325,180;348,120;357,90;413,50;429,125;438,50;485,75;535,70;548,98;568,80;577,100;592,130;612,65;640,65;662,98;690,205;699,90;707,100;727,65",
    down: "24,80;45,65;62,78;74,100;113,105;138,70;165,80;240,50;282,80;321,110;354,90;413,50;432,125;485,75;548,70;568,75;590,80;612,50;640,45;660,138;689,95;706,70" },
  karvanopat: { span: 749, rough: 0.9,
    body: "0 0 0;10 0 0;14 50 50;22 80 40;30 30 30;38 20 10;48 70 40;56 40 40;60 2 2;66 30 20;72 3 8;80 50 40;88 3 3;95 60 50;103 3 3;110 40 50;118 30 20;125 10 15;132 40 40;138 5 5;148 3 3;152 25 20;168 50 60;180 20 15;187 3 3;193 3 3;197 30 50;203 15 15;212 60 60;222 60 70;230 8 10;244 3 3;248 0 0;252 100 90;260 30 20;262 0 0;293 0 0;298 90 80;310 50 50;322 40 30;330 3 3;332 0 0;362 2 2;370 50 50;376 3 3;380 5 5;390 15 20;400 40 40;410 3 3;412 0 0;430 3 3;435 70 70;448 40 40;455 5 5;462 0 0;485 2 2;492 40 40;503 50 60;512 5 5;530 0 0;540 50 40;550 3 3;568 0 0;575 60 50;582 3 3;590 40 40;610 50 40;630 40 50;640 10 20;655 30 40;668 3 3;675 2 2;681 90 60;688 5 3;695 50 50;700 3 3;708 60 50;720 30 20;731 0 0",
    up: "14,90;21,245;31,45;48,85;80,60;94,92;113,78;133,65;168,150;197,45;207,158;215,100;223,85;252,145;297,132;305,105;322,120;371,125;400,50;436,92;446,78;502,125;540,68;575,72;595,90;602,80;622,100;635,118;655,65;667,40;681,265;695,75;708,95;720,50",
    down: "15,70;27,65;52,50;95,55;110,108;133,55;157,45;170,78;207,100;215,112;223,110;252,215;298,85;322,60;371,55;405,58;433,82;453,70;501,78;539,75;575,70;600,55;615,65;632,85;652,60;681,85;695,60;708,60" }
};

const WIDTH = 492;
const HEIGHT = 248;
const AXIS = 128;
const UNITS_PER_PX = 3;
const SPIKE_REACH = 3;

const parse = (text, separator) =>
  text.split(";").map((item) => item.split(separator).map(Number));

function randomFrom(seed) {
  let state = seed;
  return () => {
    state = (state * 1664525 + 1013904223) % 4294967296;
    return state / 4294967296;
  };
}

function envelope(points, x, column) {
  for (let i = 1; i < points.length; i++) {
    const a = points[i - 1];
    const b = points[i];
    if (x <= b[0]) {
      const t = (x - a[0]) / (b[0] - a[0]);
      return a[column] + (b[column] - a[column]) * t;
    }
  }
  return 0;
}

function side(clip, column, spikes, random) {
  const scale = WIDTH / clip.span;
  const heights = [];
  let grain = 0.5;
  for (let px = 0; px <= WIDTH; px++) {
    const body = envelope(clip.body, px / scale, column);
    grain = grain * 0.25 + random() * 0.75;
    heights.push(body * (body > 12 ? 1 + clip.rough * 1.3 * (grain - 0.5) : 1));
  }
  for (const [x, height] of spikes) {
    const center = Math.round(x * scale);
    for (let d = 1 - SPIKE_REACH; d < SPIKE_REACH; d++) {
      const i = center + d;
      if (i < 0 || i > WIDTH) continue;
      const value = height * (1 - Math.abs(d) / SPIKE_REACH);
      heights[i] = Math.max(heights[i], value);
    }
  }
  return heights.map((value) => value / UNITS_PER_PX);
}

function draw(svg, seed) {
  const source = clips[svg.dataset.clip];
  const clip = { span: source.span, rough: source.rough, body: parse(source.body, " ") };
  const random = randomFrom(seed);
  const up = side(clip, 1, parse(source.up, ","), random);
  const down = side(clip, 2, parse(source.down, ","), random);
  const top = up.map((h, x) => `${x} ${(AXIS - h).toFixed(1)}`);
  const bottom = down.map((h, x) => `${x} ${(AXIS + h).toFixed(1)}`).reverse();
  svg.setAttribute("viewBox", `0 0 ${WIDTH} ${HEIGHT}`);
  svg.setAttribute("preserveAspectRatio", "none");
  svg.innerHTML =
    `<path d="M0 127h${WIDTH}v1H0z" opacity="0.35"/>` +
    `<path d="M${top.join("L")}L${bottom.join("L")}Z"/>`;
}

document.querySelectorAll(".wave").forEach((svg, i) => draw(svg, 97 + i * 31));
```
